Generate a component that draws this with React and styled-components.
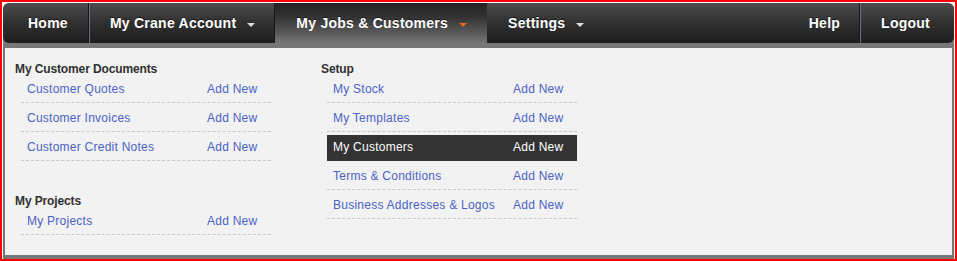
import styled, { createGlobalStyle } from "styled-components";

const GlobalStyle = createGlobalStyle`
  body {
    margin: 0;
    background: #fff;
    font-family: "Liberation Sans", Arial, sans-serif;
  }
`;

const Frame = styled.div`
  width: 957px;
  height: 261px;
  box-sizing: border-box;
  border: 2px solid #ff0000;
  padding: 1px 1px 0 1px;
  background: #fff;
`;

const Menu = styled.div`
  height: 100%;
  display: flex;
  flex-direction: column;
  background: #777;
  border-radius: 6px 6px 0 0;
`;

const Nav = styled.nav`
  height: 40px;
  flex: none;
  display: flex;
  align-items: stretch;
  border-radius: 6px;
  overflow: hidden;
  background: linear-gradient(to bottom, #4c4c4c 0%, #303030 50%, #1d1d1d 100%);
`;

const Tab = styled.a`
  display: flex;
  align-items: center;
  gap: 11px;
  padding: ${(p) => p.$pad || "0 20px 0 21px"};
  color: #fff;
  font-size: 14px;
  font-weight: bold;
  letter-spacing: 0.25px;
  text-decoration: none;
  text-shadow: 0 -1px 0 rgba(0, 0, 0, 0.6);
  white-space: nowrap;
  border-right: ${(p) => (p.$divider ? "1px solid #14141a" : "none")};
  box-shadow: ${(p) => (p.$divider ? "1px 0 0 #6c7080" : "none")};
  background: ${(p) =>
    p.$active
      ? "linear-gradient(to bottom, #222 0%, #333 35%, #5a5a5a 75%, #777 100%)"
      : "transparent"};
`;

const Spacer = styled.div`
  flex: 1;
`;

const Caret = styled.span`
  width: 0;
  height: 0;
  margin-top: 4px;
  border-left: 4px solid transparent;
  border-right: 4px solid transparent;
  border-top: 4px solid ${(p) => (p.$active ? "#e8641c" : "#ddd")};
`;

const Panel = styled.div`
  flex: 1;
  margin: 5px 2px 4px;
  background: #f2f2f2;
  padding: 13px 10px 0;
  display: flex;
`;

const Column = styled.div`
  width: 306px;
`;

const Heading = styled.h3`
  margin: ${(p) => (p.$later ? "32px 0 -3px" : "0 0 -3px")};
  font-size: 12px;
  line-height: 16px;
  font-weight: bold;
  letter-spacing: -0.12px;
  color: #303030;
`;

const List = styled.ul`
  list-style: none;
  margin: 0 0 0 6px;
  padding: 0;
  width: 250px;
`;

const Row = styled.li`
  display: flex;
  margin-top: 3px;
  padding: 4px 6px 5px;
  line-height: 16px;
  font-size: 12px;
  letter-spacing: 0.25px;
  border-bottom: 1px dashed ${(p) => (p.$active ? "#333" : "#c8c8c8")};
  background: ${(p) => (p.$active ? "#333" : "transparent")};
`;

const Item = styled.a`
  width: 180px;
  color: ${(p) => (p.$active ? "#fff" : "#4a62c4")};
  text-decoration: none;
`;

const AddNew = styled.a`
  color: ${(p) => (p.$active ? "#fff" : "#4a62c4")};
  text-decoration: none;
`;

const Section = ({ title, items, later, active }) => (
  <>
    <Heading $later={later}>{title}</Heading>
    <List>
      {items.map((name) => (
        <Row key={name} $active={name === active}>
          <Item $active={name === active}>{name}</Item>
          <AddNew $active={name === active}>Add New</AddNew>
        </Row>
      ))}
    </List>
  </>
);

export default function App() {
  return (
    <>
      <GlobalStyle />
      <Frame>
        <Menu>
          <Nav>
            <Tab $divider $pad="0 20px 0 25px">Home</Tab>
            <Tab $divider $pad="0 19px 0 21px">
              My Crane Account <Caret />
            </Tab>
            <Tab $active $pad="0 20px 0 21px">
              My Jobs &amp; Customers <Caret $active />
            </Tab>
            <Tab>
              Settings <Caret />
            </Tab>
            <Spacer />
            <Tab $divider $pad="0 19px 0 21px">Help</Tab>
            <Tab $pad="0 24px 0 21px">Logout</Tab>
          </Nav>
          <Panel>
            <Column>
              <Section
                title="My Customer Documents"
                items={["Customer Quotes", "Customer Invoices", "Customer Credit Notes"]}
              />
              <Section title="My Projects" items={["My Projects"]} later />
            </Column>
            <Column>
              <Section
                title="Setup"
                active="My Customers"
                items={[
                  "My Stock",
                  "My Templates",
                  "My Customers",
                  "Terms & Conditions",
                  "Business Addresses & Logos",
                ]}
              />
            </Column>
          </Panel>
        </Menu>
      </Frame>
    </>
  );
}
